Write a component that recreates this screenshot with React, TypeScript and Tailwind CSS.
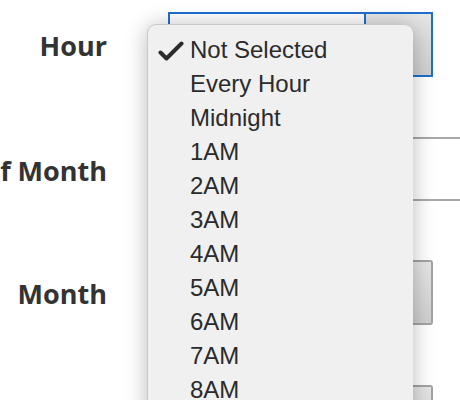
import React from "react";

const hours = ["Not Selected", "Every Hour", "Midnight", "1AM", "2AM", "3AM", "4AM", "5AM", "6AM", "7AM", "8AM", "9AM"];

function Label({ text }: { text: string }) {
    return (
        <div className="flex w-[107px] shrink-0 justify-end pt-[4px]">
            <span className="whitespace-nowrap text-[27px] font-bold text-[#333] [font-family:'Open_Sans',sans-serif]">{text}</span>
        </div>
    );
}

function SelectBox({ focused }: { focused?: boolean }) {
    const border = focused ? "border-[#1f6fce]" : "border-[#a3a3a3]";
    return (
        <div className={`ml-[61px] flex h-[65px] w-[265px] shrink-0 border-2 ${border} ${focused ? "" : "rounded-[3px]"}`}>
            <div className="flex-1 bg-white" />
            <div className={`w-[67px] border-l-2 ${border} bg-gradient-to-b from-[#e6e6e6] to-[#cfcfcf]`} />
        </div>
    );
}

export default function App() {
    return (
        <div className="relative h-[400px] w-[460px] overflow-hidden bg-white">
            <div className="flex flex-col pt-[12px]">
                <div className="flex h-[65px] items-center">
                    <Label text="Hour" />
                    <SelectBox focused />
                </div>
                <div className="mt-[60px] flex h-[64px] items-center">
                    <Label text="Day of Month" />
                    <div className="ml-[61px] h-[64px] w-[340px] shrink-0 border-2 border-[#a8a8a8] bg-white" />
                </div>
                <div className="mt-[59px] flex h-[65px] items-center">
                    <Label text="Month" />
                    <SelectBox />
                </div>
                <div className="mt-[60px] flex h-[65px] items-center">
                    <Label text="Weekday" />
                    <SelectBox />
                </div>
            </div>

            {/* open dropdown */}
            <div className="absolute left-[147px] top-[24px] h-[420px] w-[266px] rounded-t-[9px] border-l border-t border-[#c9c9c9] bg-[#f0f0f0] pt-[8px] shadow-[0_2px_22px_rgba(0,0,0,0.28)]">
                {hours.map((h, i) => (
                    <div key={h} className="relative h-[34px] pl-[42px] text-[24px] leading-[34px] text-[#2b2b2b] [font-family:'Liberation_Sans',Arial,sans-serif]">
                        {i === 0 && (
                            <svg className="absolute left-[10px] top-[8px]" width="26" height="20" viewBox="0 0 26 20">
                                <path d="M2.5 11.5 L8.5 17.5 L23.5 2.5" fill="none" stroke="#2b2b2b" strokeWidth="4" strokeLinecap="round" strokeLinejoin="round" />
                            </svg>
                        )}
                        {h}
                    </div>
                ))}
            </div>
        </div>
    );
}
